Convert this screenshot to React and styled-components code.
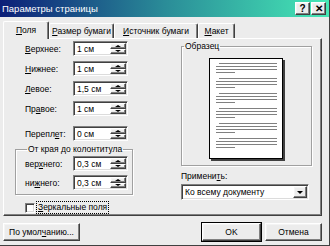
import styled, { createGlobalStyle, css } from "styled-components";

const GlobalStyle = createGlobalStyle`
  html, body { margin: 0; padding: 0; background: #ececec; }
  body {
    font-family: "Liberation Sans", Arial, sans-serif;
    font-size: 8.5px;
    color: #000;
  }
  * { box-sizing: border-box; }
`;

const raised = css`
  border: 1px solid;
  border-color: #fff #404040 #404040 #fff;
  box-shadow: inset -1px -1px 0 #808080, inset 1px 1px 0 #f4f4f4;
  background: #ececec;
`;

const sunken = css`
  border: 1px solid;
  border-color: #808080 #fff #fff #808080;
  box-shadow: inset 1px 1px 0 #404040, inset -1px -1px 0 #dcdcdc;
  background: #fff;
`;

const Window = styled.div`
  width: 330px;
  height: 246px;
  background: #ececec;
  border-right: 1px solid #404040;
  border-bottom: 1px solid #404040;
  display: flex;
  flex-direction: column;
`;

const TitleBar = styled.div`
  height: 17px;
  display: flex;
  align-items: center;
  padding: 0 3px 0 2px;
  background: linear-gradient(to right, #0c1f78 0%, #2a8c98 50%, #46e8b6 100%);
  color: #fff;
  font-size: 9.5px;
`;

const Title = styled.span`
  flex: 1;
`;

const CaptionBtn = styled.div`
  ${raised};
  width: 15px;
  height: 13px;
  margin-left: ${(p) => (p.$gap ? "1px" : "0")};
  display: flex;
  align-items: center;
  justify-content: center;
  color: #000;
  font-weight: bold;
  font-size: 10px;
  line-height: 1;
`;

const Body = styled.div`
  flex: 1;
  padding: 4px 7px 0 3px;
  display: flex;
  flex-direction: column;
`;

const Tabs = styled.div`
  display: flex;
  align-items: flex-end;
  height: 17px;
  padding-left: 1px;
  position: relative;
  z-index: 1;
`;

const Tab = styled.div`
  width: ${(p) => p.$w}px;
  height: ${(p) => (p.$active ? 18 : 15)}px;
  margin-left: ${(p) => (p.$active ? "-1px" : "0")};
  margin-bottom: ${(p) => (p.$active ? "-1px" : "0")};
  border-left: 1px solid #fff;
  border-top: 1px solid #fff;
  border-right: 1px solid #404040;
  box-shadow: inset -1px 0 0 #808080;
  border-radius: 2px 2px 0 0;
  background: #ececec;
  display: flex;
  align-items: center;
  justify-content: center;
  white-space: nowrap;
  padding-bottom: ${(p) => (p.$active ? "2px" : "0")};
`;

const Key = styled.span`
  text-decoration: underline;
`;

const Panel = styled.div`
  height: 178px;
  border: 1px solid;
  border-color: #fff #404040 #404040 #fff;
  box-shadow: inset -1px -1px 0 #808080;
  display: flex;
`;

const LeftCol = styled.div`
  width: 134px;
  padding: 2px 0 0 11px;
  display: flex;
  flex-direction: column;
`;

const Row = styled.div`
  display: flex;
  align-items: center;
  height: 15px;
  margin-top: ${(p) => p.$mt || 0}px;
  padding-left: ${(p) => (p.$inset ? 0 : 10)}px;
`;

const Label = styled.span`
  width: 48px;
`;

const SpinBox = styled.div`
  ${sunken};
  width: 55px;
  height: 15px;
  display: flex;
  padding: 1px;
`;

const Value = styled.span`
  flex: 1;
  padding-left: 2px;
  line-height: 12px;
`;

const Spinner = styled.div`
  width: 16px;
  display: flex;
  flex-direction: column;
`;

const SpinBtn = styled.div`
  ${raised};
  flex: 1;
  display: flex;
  align-items: center;
  justify-content: center;
  &::after {
    content: "";
    border-left: 3px solid transparent;
    border-right: 3px solid transparent;
    ${(p) =>
      p.$down
        ? "border-top: 2px solid #000;"
        : "border-bottom: 2px solid #000;"}
  }
`;

const Group = styled.fieldset`
  margin: ${(p) => p.$mt || 0}px 0 0 0;
  padding: ${(p) => p.$pad};
  min-inline-size: 0;
  border: 1px solid #a0a0a0;
  box-shadow: 1px 1px 0 #fff, inset 1px 1px 0 #fff;
  width: ${(p) => p.$w}px;
  display: flex;
  flex-direction: column;
  align-items: ${(p) => p.$align || "stretch"};
`;

const Legend = styled.legend`
  padding: 0 1px;
  margin-left: 2px;
  line-height: 10px;
`;

const CheckRow = styled.div`
  display: flex;
  align-items: center;
  margin: 7px 0 0 10px;
`;

const CheckBox = styled.div`
  width: 10px;
  height: 10px;
  ${sunken};
`;

const CheckLabel = styled.span`
  margin-left: 2px;
  padding: 0 1px;
  outline: 1px dotted #000;
  outline-offset: 0;
  line-height: 11px;
`;

const RightCol = styled.div`
  padding: 1px 0 0 43px;
  display: flex;
  flex-direction: column;
`;

const PageSvg = styled.svg`
  display: block;
  margin: 7px 0 4px;
`;

const ApplyLabel = styled.div`
  margin: 5px 0 0 0;
  line-height: 11px;
`;

const Select = styled.div`
  ${sunken};
  width: 128px;
  height: 16px;
  margin-top: 2px;
  display: flex;
  align-items: center;
  padding: 1px;
`;

const SelectText = styled.span`
  flex: 1;
  padding-left: 2px;
`;

const DropBtn = styled.div`
  ${raised};
  width: 14px;
  height: 12px;
  display: flex;
  align-items: center;
  justify-content: center;
  &::after {
    content: "";
    border-left: 3px solid transparent;
    border-right: 3px solid transparent;
    border-top: 3px solid #000;
  }
`;

const Footer = styled.div`
  display: flex;
  margin-top: 7px;
  gap: 4px;
`;

const Button = styled.div`
  ${raised};
  width: ${(p) => p.$w}px;
  height: 18px;
  display: flex;
  align-items: center;
  justify-content: center;
  margin-left: ${(p) => (p.$push ? "auto" : "0")};
  ${(p) => p.$default && "outline: 1px solid #000;"}
`;

const Spin = ({ value }) => (
  <SpinBox>
    <Value>{value}</Value>
    <Spinner>
      <SpinBtn />
      <SpinBtn $down />
    </Spinner>
  </SpinBox>
);

const Page = () => {
  const paras = [0, 1, 2, 3, 4, 5];
  return (
    <PageSvg width="76" height="103" viewBox="0 0 76 103">
      <rect x="2" y="2" width="74" height="101" fill="#404040" />
      <rect x="0.5" y="0.5" width="73" height="100" fill="#fff" stroke="#000" />
      {paras.map((i) => {
        const y = 5.5 + i * 15;
        return (
          <g key={i} stroke="#808080" strokeWidth="1">
            <line x1="10" x2="68" y1={y} y2={y} />
            <line x1="7" x2="68" y1={y + 3} y2={y + 3} />
            <line x1="7" x2="68" y1={y + 6} y2={y + 6} />
            <line x1="7" x2="26" y1={y + 9} y2={y + 9} />
          </g>
        );
      })}
    </PageSvg>
  );
};

export default function App() {
  return (
    <>
      <GlobalStyle />
      <Window>
        <TitleBar>
          <Title>Параметры страницы</Title>
          <CaptionBtn>?</CaptionBtn>
          <CaptionBtn $gap>✕</CaptionBtn>
        </TitleBar>
        <Body>
          <Tabs>
            <Tab $w={46} $active>
              <span><Key>П</Key>оля</span>
            </Tab>
            <Tab $w={65}>
              <span><Key>Р</Key>азмер бумаги</span>
            </Tab>
            <Tab $w={84}>
              <span><Key>И</Key>сточник бумаги</span>
            </Tab>
            <Tab $w={37}>
              <span><Key>М</Key>акет</span>
            </Tab>
          </Tabs>
          <Panel>
            <LeftCol>
              <Row $mt={0}>
                <Label><Key>В</Key>ерхнее:</Label>
                <Spin value="1 см" />
              </Row>
              <Row $mt={5}>
                <Label><Key>Н</Key>ижнее:</Label>
                <Spin value="1 см" />
              </Row>
              <Row $mt={5}>
                <Label><Key>Л</Key>евое:</Label>
                <Spin value="1,5 см" />
              </Row>
              <Row $mt={5}>
                <Label>Пр<Key>а</Key>вое:</Label>
                <Spin value="1 см" />
              </Row>
              <Row $mt={10}>
                <Label>Перепл<Key>е</Key>т:</Label>
                <Spin value="0 см" />
              </Row>
              <Group $w={118} $mt={3} $pad="2px 0 4px 9px">
                <Legend>От края до колонтитула</Legend>
                <Row $inset>
                  <Label>вер<Key>х</Key>него:</Label>
                  <Spin value="0,3 см" />
                </Row>
                <Row $inset $mt={4}>
                  <Label>ни<Key>ж</Key>него:</Label>
                  <Spin value="0,3 см" />
                </Row>
              </Group>
              <CheckRow>
                <CheckBox />
                <CheckLabel><Key>З</Key>еркальные поля</CheckLabel>
              </CheckRow>
            </LeftCol>
            <RightCol>
              <Group $w={131} $mt={1} $pad="0" $align="center">
                <Legend>Образец</Legend>
                <Page />
              </Group>
              <ApplyLabel>Примени<Key>т</Key>ь:</ApplyLabel>
              <Select>
                <SelectText>Ко всему документу</SelectText>
                <DropBtn />
              </Select>
            </RightCol>
          </Panel>
          <Footer>
            <Button $w={77}>По умол<Key>ч</Key>анию...</Button>
            <Button $w={59} $push $default>OK</Button>
            <Button $w={57}>Отмена</Button>
          </Footer>
        </Body>
      </Window>
    </>
  );
}
